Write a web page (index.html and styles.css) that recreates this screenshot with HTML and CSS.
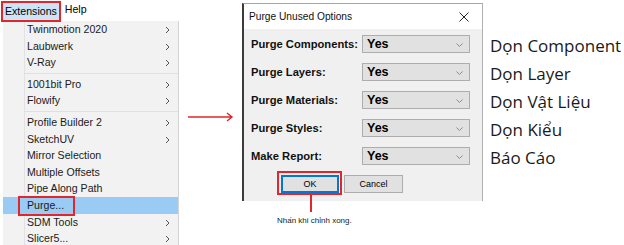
FILE: index.html
```html
<!DOCTYPE html>
<html lang="vi">
<head>
    <meta charset="UTF-8">
    <meta name="viewport" content="width=device-width, initial-scale=1.0">
    <title>Purge Unused Options</title>
    <link rel="stylesheet" href="styles.css">
</head>
<body>
    <div class="scene">
        <!-- Menu Extensions -->
        <div class="menu-col">
            <div class="menubar">
                <span class="menubar-item active">Extensions</span>
                <span class="menubar-item">Help</span>
            </div>
            <ul class="dropdown">
                <li class="item">Twinmotion 2020<svg class="sub" viewBox="0 0 5 8"><path d="M1 1l3 3-3 3"/></svg></li>
                <li class="item">Laubwerk<svg class="sub" viewBox="0 0 5 8"><path d="M1 1l3 3-3 3"/></svg></li>
                <li class="item">V-Ray<svg class="sub" viewBox="0 0 5 8"><path d="M1 1l3 3-3 3"/></svg></li>
                <li class="sep"></li>
                <li class="item">1001bit Pro<svg class="sub" viewBox="0 0 5 8"><path d="M1 1l3 3-3 3"/></svg></li>
                <li class="item">Flowify<svg class="sub" viewBox="0 0 5 8"><path d="M1 1l3 3-3 3"/></svg></li>
                <li class="sep"></li>
                <li class="item">Profile Builder 2<svg class="sub" viewBox="0 0 5 8"><path d="M1 1l3 3-3 3"/></svg></li>
                <li class="item">SketchUV<svg class="sub" viewBox="0 0 5 8"><path d="M1 1l3 3-3 3"/></svg></li>
                <li class="item">Mirror Selection</li>
                <li class="item">Multiple Offsets</li>
                <li class="item">Pipe Along Path</li>
                <li class="item hover">Purge...<span class="mark"></span></li>
                <li class="item">SDM Tools<svg class="sub" viewBox="0 0 5 8"><path d="M1 1l3 3-3 3"/></svg></li>
                <li class="item">Slicer5...<svg class="sub" viewBox="0 0 5 8"><path d="M1 1l3 3-3 3"/></svg></li>
            </ul>
        </div>

        <!-- Mũi tên -->
        <div class="arrow-col">
            <svg class="arrow" viewBox="0 0 46 10"><path d="M0 5h44M39 1l5 4-5 4"/></svg>
        </div>

        <!-- Hộp thoại -->
        <div class="dialog">
            <div class="titlebar">
                <span>Purge Unused Options</span>
                <svg class="close" viewBox="0 0 10 10"><path d="M0.5 0.5l9 9M9.5 0.5l-9 9"/></svg>
            </div>
            <div class="dialog-body">
                <div class="row"><span class="label">Purge Components:</span><div class="select">Yes<svg viewBox="0 0 7 4"><path d="M0.5 0.5l3 3 3-3"/></svg></div></div>
                <div class="row"><span class="label">Purge Layers:</span><div class="select">Yes<svg viewBox="0 0 7 4"><path d="M0.5 0.5l3 3 3-3"/></svg></div></div>
                <div class="row"><span class="label">Purge Materials:</span><div class="select">Yes<svg viewBox="0 0 7 4"><path d="M0.5 0.5l3 3 3-3"/></svg></div></div>
                <div class="row"><span class="label">Purge Styles:</span><div class="select">Yes<svg viewBox="0 0 7 4"><path d="M0.5 0.5l3 3 3-3"/></svg></div></div>
                <div class="row"><span class="label">Make Report:</span><div class="select">Yes<svg viewBox="0 0 7 4"><path d="M0.5 0.5l3 3 3-3"/></svg></div></div>
                <div class="buttons">
                    <button class="btn btn-ok">OK
                        <span class="callout"><span class="callout-text">Nhấn khi chỉnh xong.</span></span>
                    </button>
                    <button class="btn">Cancel</button>
                </div>
            </div>
        </div>

        <!-- Chú thích -->
        <ul class="notes">
            <li>Dọn Component</li>
            <li>Dọn Layer</li>
            <li>Dọn Vật Liệu</li>
            <li>Dọn Kiểu</li>
            <li>Báo Cáo</li>
        </ul>
    </div>
</body>
</html>
```
FILE: styles.css
```css
/* Estilos generales */
body {
    margin: 0;
    background: #ffffff;
    font-family: 'Liberation Sans', Arial, sans-serif;
    color: #000;
    overflow: hidden;
}

.scene {
    display: flex;
    width: 624px;
    height: 245px;
}

/* Menu */
.menu-col {
    width: 180px;
    flex-shrink: 0;
}

.menubar {
    display: flex;
    height: 21px;
    align-items: flex-start;
    font-size: 10.6px;
}

.menubar-item {
    height: 15px;
    line-height: 15px;
    padding: 1px 4px;
    margin-top: 1px;
}

.menubar-item.active {
    margin-left: 1px;
    padding: 1px 2px;
    border: 2px solid #e3262b;
    background: #cce4f7;
}

.dropdown {
    list-style: none;
    margin: 0 0 0 3px;
    padding: 0;
    width: 175px;
    height: 224px;
    border-right: 1px solid #d4d4d4;
    background: #f2f2f2 linear-gradient(to right, transparent 21px, #e2e2e2 21px, #e2e2e2 22px, transparent 22px);
    font-size: 10.6px;
    color: #1a1a1a;
}

.item {
    position: relative;
    height: 16.6px;
    line-height: 16.6px;
    padding-left: 24px;
    display: flex;
    align-items: center;
}

.item .sub {
    position: absolute;
    right: 8px;
    top: 5px;
    width: 5px;
    height: 8px;
    fill: none;
    stroke: #555;
    stroke-width: 1;
}

.item.hover {
    background: #99cbf5;
}

.mark {
    position: absolute;
    left: 15px;
    top: -1px;
    width: 53px;
    height: 16px;
    border: 2px solid #e3262b;
}

.sep {
    height: 5px;
    margin-left: 21px;
    background: linear-gradient(#e0e0e0, #e0e0e0) center / 100% 1px no-repeat;
}

/* Flecha */
.arrow-col {
    width: 62px;
    flex-shrink: 0;
    padding-top: 112px;
}

.arrow {
    display: block;
    margin-left: 8px;
    width: 46px;
    height: 10px;
    fill: none;
    stroke: #e3262b;
    stroke-width: 1.4;
}

/* Dialogo */
.dialog {
    width: 238px;
    height: 197px;
    margin-top: 3px;
    flex-shrink: 0;
    border-left: 2px solid #3c3c3c;
    border-top: 1px solid #a6a6a6;
    border-right: 1px solid #b0b0b0;
    background: #f0f0f0;
}

.titlebar {
    height: 25px;
    background: #ffffff;
    display: flex;
    align-items: center;
    justify-content: space-between;
    padding: 0 13px 0 5px;
    font-size: 10.2px;
    color: #111;
}

.close {
    width: 10px;
    height: 10px;
    fill: none;
    stroke: #222;
    stroke-width: 1;
}

.dialog-body {
    padding: 6px 12px 0 7px;
}

.row {
    display: flex;
    align-items: center;
    height: 18px;
    margin-bottom: 10px;
}

.label {
    width: 111px;
    flex-shrink: 0;
    white-space: nowrap;
    font-weight: bold;
    font-size: 11.2px;
    color: #111;
}

.select {
    position: relative;
    flex: 1;
    height: 16px;
    line-height: 16px;
    padding-left: 4px;
    border: 1px solid #adadad;
    background: #e1e1e1;
    font-weight: bold;
    font-size: 12.5px;
}

.select svg {
    position: absolute;
    right: 6px;
    top: 7px;
    width: 7px;
    height: 4px;
    fill: none;
    stroke: #8a8a8a;
    stroke-width: 1;
}

.buttons {
    display: flex;
    gap: 5px;
    padding-left: 30px;
}

.btn {
    position: relative;
    height: 18px;
    width: 59px;
    padding: 0;
    border: 1px solid #adadad;
    background: #e1e1e1;
    font-family: 'Liberation Sans', Arial, sans-serif;
    font-size: 9px;
    color: #000;
}

.btn-ok {
    width: 58px;
    border: 2px solid #0078d7;
}

/* Nota */
.callout {
    position: absolute;
    left: -6px;
    top: -6px;
    width: 61px;
    height: 20px;
    border: 2px solid #e3262b;
}

.callout::after {
    content: "";
    position: absolute;
    left: 31px;
    top: 22px;
    width: 2px;
    height: 17px;
    background: #e3262b;
}

.callout-text {
    position: absolute;
    left: -2px;
    top: 43px;
    white-space: nowrap;
    font-size: 8px;
    color: #222;
}

/* Leyenda */
.notes {
    list-style: none;
    margin: 32px 0 0 7px;
    padding: 0;
    font-family: 'Open Sans', sans-serif;
    font-size: 17px;
    color: #1a1a1a;
}

.notes li {
    height: 28px;
    line-height: 28px;
    white-space: nowrap;
}
```
